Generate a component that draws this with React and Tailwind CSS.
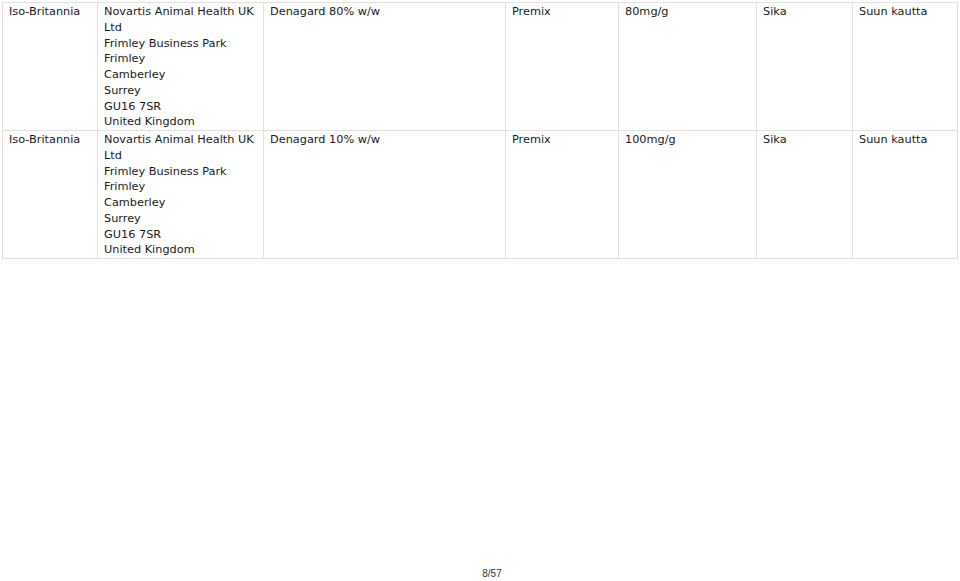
import React from 'react';

const address = [
  'Novartis Animal Health UK',
  'Ltd',
  'Frimley Business Park',
  'Frimley',
  'Camberley',
  'Surrey',
  'GU16 7SR',
  'United Kingdom',
];

const rows = [
  { country: 'Iso-Britannia', name: 'Denagard 80% w/w', form: 'Premix', strength: '80mg/g', species: 'Sika', route: 'Suun kautta' },
  { country: 'Iso-Britannia', name: 'Denagard 10% w/w', form: 'Premix', strength: '100mg/g', species: 'Sika', route: 'Suun kautta' },
];

const cell = 'border border-[#e2e2e2] align-top whitespace-nowrap pl-[6px] pr-1 pt-px pb-0 leading-[15.75px]';

export default function App() {
  return (
    <div className="h-[581px] w-[960px] bg-white flex flex-col overflow-hidden text-[#1a1a1a]" style={{ fontFamily: '"DejaVu Sans", Verdana, sans-serif' }}>
      <div className="pl-[2px] pt-[2px]">
        <table className="table-fixed border-collapse w-[955px] text-[11.3px]">
          <colgroup>
            <col className="w-[95px]" />
            <col className="w-[166px]" />
            <col className="w-[242px]" />
            <col className="w-[113px]" />
            <col className="w-[138px]" />
            <col className="w-[96px]" />
            <col className="w-[105px]" />
          </colgroup>
          <tbody>
            {rows.map((r, i) => (
              <tr key={i}>
                <td className={cell}>{r.country}</td>
                <td className={cell}>
                  {address.map((l) => (
                    <div key={l}>{l}</div>
                  ))}
                </td>
                <td className={cell}>{r.name}</td>
                <td className={cell}>{r.form}</td>
                <td className={cell}>{r.strength}</td>
                <td className={cell}>{r.species}</td>
                <td className={cell}>{r.route}</td>
              </tr>
            ))}
          </tbody>
        </table>
      </div>
      <div className="mt-auto flex justify-center pl-[24px] text-[10px] leading-[14px] text-[#333]" style={{ fontFamily: '"Liberation Sans", Arial, sans-serif' }}>
        8/57
      </div>
    </div>
  );
}
